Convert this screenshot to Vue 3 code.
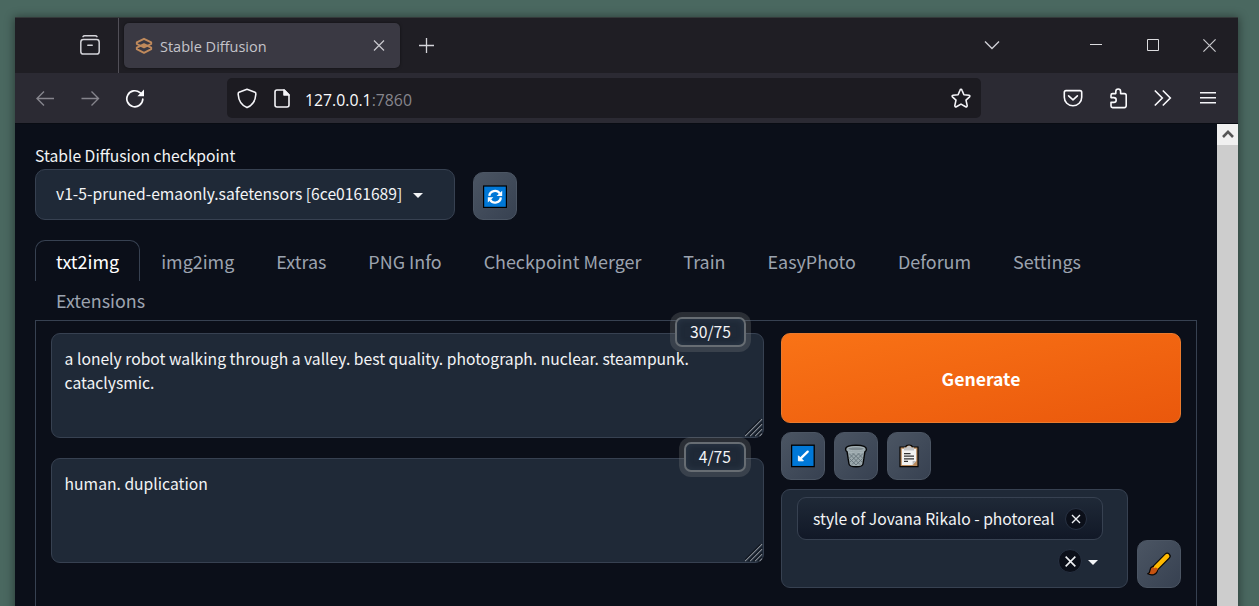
<script setup>
const tabs = ['txt2img', 'img2img', 'Extras', 'PNG Info', 'Checkpoint Merger', 'Train', 'EasyPhoto', 'Deforum', 'Settings', 'Extensions']
</script>

<template>
  <div class="desktop">
    <div class="window">
      <header class="tabstrip">
        <div class="recent">
          <svg width="22" height="22" viewBox="0 0 22 22" fill="none" stroke="#d4d4d9" stroke-width="1.5" stroke-linecap="round">
            <path d="M4 2.6C4.4 1.9 5 1.7 5.7 1.7H16.3C17 1.7 17.6 1.9 18 2.6" />
            <rect x="1.8" y="5.6" width="18.4" height="14.4" rx="2.6" />
            <path d="M8.8 11.2H13.2" />
          </svg>
        </div>
        <div class="browser-tab">
          <svg class="favicon" width="18" height="18" viewBox="0 0 18 18" fill="none" stroke="#c08a5c" stroke-width="1.9" stroke-linejoin="round">
            <path d="M1.8 7V5.4L9 1.8L16.2 5.4V7L9 10.4Z" />
            <path d="M1.8 10.6V12.2L9 15.8L16.2 12.2V10.6L9 7.2Z" />
            <path d="M6.5 8.8L9 7.4L11.5 8.8L9 10.2Z" fill="#c08a5c" stroke="none" />
          </svg>
          <span class="tab-title">Stable Diffusion</span>
          <svg class="tab-close" width="12" height="12" viewBox="0 0 12 12" stroke="#c9c9cf" stroke-width="1.2"><path d="M1 .5L11 10.5M11 .5L1 10.5" /></svg>
        </div>
        <svg class="plus" width="16" height="16" viewBox="0 0 16 16" stroke="#d4d4d9" stroke-width="1.3"><path d="M7.5 0V15M0 7.5H15" /></svg>
        <div class="window-buttons">
          <svg width="16" height="10" viewBox="0 0 16 10" fill="none" stroke="#cfcfd4" stroke-width="1.4"><path d="M1 .5L8 7.5L15 .5" /></svg>
          <svg class="min" width="12" height="13" viewBox="0 0 12 13" stroke="#dcdcdf"><path d="M0 5.5H12" /></svg>
          <svg class="max" width="12" height="12" viewBox="0 0 12 12" fill="none" stroke="#dcdcdf"><path d="M.5 -.5H11.5V10.5H.5Z" /></svg>
          <svg class="cls" width="13" height="13" viewBox="0 0 13 13" stroke="#c8c8cc" stroke-width="1.2"><path d="M.4 .4L12.6 12.6M12.6 .4L.4 12.6" /></svg>
        </div>
      </header>

      <nav class="toolbar">
        <svg class="back" width="19" height="16" viewBox="0 0 19 16" fill="none" stroke="#85848c" stroke-width="1.4"><path d="M18 8.5H1M8 1.5L1 8.5L8 15.5" /></svg>
        <svg class="forward" width="19" height="16" viewBox="0 0 19 16" fill="none" stroke="#85848c" stroke-width="1.4"><path d="M.5 8.5H17.5M10.5 1.5L17.5 8.5L10.5 15.5" /></svg>
        <svg class="reload" width="20" height="20" viewBox="0 0 20 20" fill="none" stroke="#fbfbfe" stroke-width="1.7">
          <path d="M17.8 11.2A8 8 0 1 1 15 4.7L17 6.4" stroke-linecap="round" />
          <path d="M19 1.6V8.2H12.4Z" fill="#fbfbfe" stroke="none" />
        </svg>
        <div class="urlbar">
          <svg width="20" height="21" viewBox="0 0 20 21" fill="none" stroke="#f4f4f8" stroke-width="1.6" stroke-linejoin="round"><path d="M10 1.2L18 4.3Q19 4.7 18.8 6.5C18.4 13 15.6 17.2 10 19.6C4.4 17.2 1.6 13 1.2 6.5Q1 4.7 2 4.3Z" /></svg>
          <svg class="doc" width="17" height="19" viewBox="0 0 17 19" fill="none" stroke="#f4f4f8" stroke-width="1.6" stroke-linejoin="round">
            <path d="M10.2 1H3Q1 1 1 3V16Q1 18 3 18H13Q15 18 15 16V6Z" /><path d="M10 1V6H15Z" fill="#f4f4f8" />
          </svg>
          <span class="url">127.0.0.1<span class="port">:7860</span></span>
          <svg class="star" width="22" height="21" viewBox="0 0 22 21" fill="none" stroke="#f4f4f8" stroke-width="1.6" stroke-linejoin="round"><path d="M11 1.4Q11.7 1.4 12 2.2L13.9 6.8L19 7.2Q20.4 7.6 19.6 8.8L16 12.2L17.2 17.7Q17 19.4 15.6 18.7L11 16.1L6.4 18.7Q5 19.4 4.8 17.7L6 12.2L2.4 8.8Q1.6 7.6 3 7.2L8.1 6.8L10 2.2Q10.3 1.4 11 1.4Z" /></svg>
        </div>
        <div class="tools">
          <svg width="20" height="18" viewBox="0 0 20 18" fill="none" stroke="#fbfbfe" stroke-width="1.6" stroke-linecap="round" stroke-linejoin="round"><path d="M3 1.6H17Q18.7 1.6 18.7 3.4V8.2C18.7 13 15 16.8 10 16.8S1.3 13 1.3 8.2V3.4Q1.3 1.6 3 1.6Z" /><path d="M5.6 6.8L10 10.8L14.4 6.8" /></svg>
          <svg class="ext" width="19" height="21" viewBox="0 0 19 21" fill="none" stroke="#fbfbfe" stroke-width="1.6" stroke-linejoin="round"><path d="M6.8 5.6V3.4A2.4 2.4 0 0 1 11.6 3.4V5.6H15.4Q17.2 5.6 17.2 7.4V17.6Q17.2 19.6 15.4 19.6H3.6Q2 19.6 2 18V14.4H4.8A2.4 2.4 0 0 0 4.8 9.6H2V7.2Q2 5.6 3.6 5.6Z" /></svg>
          <svg class="more" width="18" height="18" viewBox="0 0 18 18" fill="none" stroke="#fbfbfe" stroke-width="1.6"><path d="M.8 1.5L8.3 9L.8 16.5M8.8 1.5L16.3 9L8.8 16.5" /></svg>
          <svg class="menu" width="16" height="14" viewBox="0 0 16 14" stroke="#f4f4f8" stroke-width="1.6"><path d="M0 1.7H16M0 6.7H16M0 11.7H16" /></svg>
        </div>
      </nav>

      <div class="viewport">
        <main class="page">
          <div class="field-label">Stable Diffusion checkpoint</div>
          <div class="checkpoint-row">
            <div class="select"><span>v1-5-pruned-emaonly.safetensors [6ce0161689]</span><i class="caret"></i></div>
            <button class="tool">
              <svg width="24" height="24" viewBox="0 0 24 24">
                <rect x=".6" y="2" width="22.8" height="21.4" fill="#0078d7" stroke="#000" stroke-width="1.2" />
                <g fill="none" stroke="#fff" stroke-width="2.3"><path d="M6.3 11.8A5.7 5.5 0 0 1 16.8 9.5" /><path d="M17.8 13.4A5.7 5.5 0 0 1 7.2 15.9" /></g>
                <path d="M19.2 6.7V12H13.6ZM4.8 18.6V13.3H10.4Z" fill="#fff" />
              </svg>
            </button>
          </div>

          <div class="tabs">
            <button v-for="(tab, i) in tabs" :key="tab" class="tab" :class="{ active: i === 0 }">{{ tab }}</button>
          </div>

          <section class="panel">
            <div class="prompts">
              <div class="prompt">
                <div class="counter">30/75</div>
                <span>a lonely robot walking through a valley. best quality. photograph. nuclear. steampunk.<br>cataclysmic.</span>
                <svg class="grip" width="18" height="18" viewBox="0 0 18 18" stroke="#8b9098" stroke-width="1.1"><path d="M0 17L17 0M5 17L17 5M10 17L17 10M14.5 17L17 14.5" /><path d="M0 15.5L15.5 0M3.6 17L17 3.6M8.6 17L17 8.6M13 17L17 13" stroke="#111720" /></svg>
              </div>
              <div class="prompt">
                <div class="counter">4/75</div>
                <span>human. duplication</span>
                <svg class="grip" width="18" height="18" viewBox="0 0 18 18" stroke="#8b9098" stroke-width="1.1"><path d="M0 17L17 0M5 17L17 5M10 17L17 10M14.5 17L17 14.5" /><path d="M0 15.5L15.5 0M3.6 17L17 3.6M8.6 17L17 8.6M13 17L17 13" stroke="#111720" /></svg>
              </div>
            </div>

            <div class="actions">
              <button class="generate">Generate</button>
              <div class="tool-row">
                <button class="tool">
                  <svg width="24" height="24" viewBox="0 0 24 24"><rect x=".6" y="1.2" width="22.6" height="21.4" fill="#0078d7" stroke="#000" stroke-width="1.3" /><path d="M16.7 7.6L9.5 14.6" stroke="#fff" stroke-width="2.3" stroke-linecap="round" /><path d="M7.4 11.8V16.8H12.4Z" fill="#fff" stroke="#fff" stroke-linejoin="round" /></svg>
                </button>
                <button class="tool">
                  <svg width="24" height="24" viewBox="0 0 24 24">
                    <path d="M1.6 5.2C1.6 2.6 6 1.2 12 1.2S22.4 2.6 22.4 5.2Q22.4 7.2 20.9 7.8L19 20Q18.5 22.8 12 22.8T5 20L3.1 7.8Q1.6 7.2 1.6 5.2Z" fill="#9ba8ac" stroke="#050607" stroke-width="1.4" />
                    <ellipse cx="12" cy="4.8" rx="8.4" ry="2" fill="#7d898e" stroke="#a9b5b9" />
                    <path d="M5 9.5L16 20.5M8 8.5L18 18M13 8.5L19 14.5M5.5 14.5L12 21M19 9.5L8 20.5M16 8.5L6 18M11 8.5L5 14.5M18.5 14.5L12 21" stroke="#66747a" stroke-width=".9" />
                    <path d="M4 8Q12 10 20 8" fill="none" stroke="#a9b5b9" />
                  </svg>
                </button>
                <button class="tool">
                  <svg width="24" height="24" viewBox="0 0 24 24">
                    <path d="M3 3H8.5Q9 1 12 1T15.5 3H21V22.6H3Z" fill="#b98a5c" stroke="#090705" stroke-width="1.2" />
                    <path d="M4.8 4.8H19.2V17L15.6 21H4.8Z" fill="#f3f3f2" /><path d="M19.2 17H15.6V21Z" fill="#bdbdbd" />
                    <path d="M7 6.4V3.6H9.6Q10 1.8 12 1.8T14.4 3.6H17V6.4Z" fill="#c4c4c4" />
                    <path d="M7 9.6H13.5M7 12.2H17M7 14.8H17M7 17.4H11" stroke="#333" stroke-width="1.2" />
                  </svg>
                </button>
              </div>
              <div class="style-row">
                <div class="styles">
                  <div class="chip"><span>style of Jovana Rikalo - photoreal</span><span class="round small"><svg width="10" height="10" viewBox="0 0 10 10" stroke="#eef0f3" stroke-width="1.35"><path d="M1 1L9 9M9 1L1 9" /></svg></span></div>
                  <div class="style-end"><span class="round"><svg width="11" height="11" viewBox="0 0 10 10" stroke="#eef0f3" stroke-width="1.45"><path d="M.6 .6L9.4 9.4M9.4 .6L.6 9.4" /></svg></span><i class="caret low"></i></div>
                </div>
                <button class="tool">
                  <svg width="24" height="24" viewBox="0 0 24 24">
                    <path d="M8.7 15.6L20.2 4.1" stroke="#0a0806" stroke-width="7" stroke-linecap="round" />
                    <path d="M.8 21.8Q2.8 21 3 18.3C3.4 14.3 7 13.5 9.2 15.4C11.6 17.7 10.2 21.6 6.8 22.6Q3.2 23.2 .8 21.8Z" fill="#c75310" stroke="#0a0806" stroke-width="1.3" />
                    <path d="M9 15.3L20.1 4.2" stroke="#ffb900" stroke-width="4.6" stroke-linecap="round" />
                    <path d="M6 17Q9 14 11 17L9.2 19.8Q6 20 6 17Z" fill="#c75310" />
                  </svg>
                </button>
              </div>
            </div>
          </section>
        </main>
        <aside class="scrollbar">
          <div class="scroll-up"><svg width="12" height="9" viewBox="0 0 12 9" fill="none" stroke="#555" stroke-width="2.6"><path d="M1 7L6 1.9L11 7" /></svg></div>
        </aside>
      </div>
    </div>
  </div>
</template>

<style>
html, body { margin: 0; overflow: hidden; background: #4a6860; }
</style>

<style scoped>
* { box-sizing: border-box; }
svg { display: block; flex: none; }
button { border: 0; padding: 0; margin: 0; font: inherit; color: inherit; }
.desktop { height: 606px; padding: 17px 21px 0 15px; overflow: hidden; background: #4a6860; }
.window { height: 620px; box-shadow: 0 1px 9px 1px rgba(0, 0, 0, .42); display: flex; flex-direction: column; background: #0b0f19; }
.tabstrip { height: 56px; flex: none; display: flex; align-items: center; background: #1f1e24; border-top: 1px solid #34393a; font-family: "Open Sans", "Noto Sans", sans-serif; }
.recent { width: 104px; height: 100%; border-right: 1px solid #514f57; padding: 16px 0 0 64px; }
.browser-tab { width: 276px; height: 45px; margin-left: 5px; padding: 0 15px 0 11px; border-radius: 5px; background: #3a3943; display: flex; align-items: center; box-shadow: 0 0 3px rgba(0, 0, 0, .5); }
.favicon { margin-right: 7px; }
.tab-title { font-size: 14.5px; color: #c4c4ca; line-height: 20px; padding-top: 2px; white-space: nowrap; }
.tab-close { margin-left: auto; }
.plus { margin-left: 19px; }
.window-buttons { margin-left: auto; padding-right: 22px; display: flex; align-items: center; }
.min { margin-left: 90px; }
.max { margin-left: 45px; overflow: visible; }
.cls { margin-left: 44px; }
.toolbar { height: 50px; flex: none; display: flex; align-items: center; background: #2b2a33; padding-left: 21px; }
.forward { margin-left: 26px; }
.reload { margin-left: 25px; }
.urlbar { width: 754px; height: 40px; margin-left: 82px; padding: 0 9px 0 10px; border-radius: 5px; background: #1c1b21; display: flex; align-items: center; font-family: "Open Sans", "Noto Sans", sans-serif; font-size: 15.8px; color: #fbfbfe; }
.doc { margin-left: 17px; }
.url { margin-left: 14px; padding-top: 4px; line-height: 20px; white-space: nowrap; }
.port { color: #86858c; }
.star { margin-left: auto; }
.tools { margin-left: 82px; display: flex; align-items: center; }
.ext { margin-left: 26px; }
.more { margin-left: 26px; }
.menu { margin-left: 28px; }
.viewport { flex: 1; display: flex; border-top: 1px solid #090c13; min-height: 0; }
.page { flex: 1; padding: 20px 20px 0; background: #0b0f19; color: #f3f4f6; font-family: "Noto Sans CJK SC", "Noto Sans", sans-serif; font-size: 15.68px; }
.scrollbar { width: 21px; background: #cdcdcd; }
.scroll-up { height: 21px; background: #f0f0f0; display: grid; place-items: center; }
.field-label { height: 25px; line-height: 23px; white-space: nowrap; }
.checkpoint-row { display: flex; align-items: flex-end; gap: 18px; height: 51px; }
.select { width: 420px; height: 51px; padding: 0 20px 2px; border: 1px solid #374151; border-radius: 10px; background: #1f2937; display: flex; align-items: center; white-space: nowrap; }
.caret { flex: none; margin-left: 11px; margin-top: 3px; border: 5px solid transparent; border-top-color: #f3f4f6; border-bottom: 0; }
.tool { width: 44px; height: 48px; flex: none; display: grid; place-items: center; border: 1px solid #4b5563; border-radius: 10px; background: linear-gradient(to bottom right, #4b5563, #374151); }
.tabs { margin-top: 20px; display: flex; flex-wrap: wrap; align-content: flex-start; height: 80px; font-size: 17.92px; color: #9ca3af; }
.tab { height: 41px; margin-bottom: -2px; padding: 0 20px; background: transparent; border: 1px solid transparent; border-bottom: 0; border-radius: 10px 10px 0 0; line-height: 40px; white-space: nowrap; }
.tab.active { color: #fff; border-color: #374151; }
.panel { height: 330px; padding: 12px 15px; border: 1px solid #374151; display: flex; gap: 17px; }
.prompts { width: 713px; display: flex; flex-direction: column; gap: 20px; }
.prompt { position: relative; height: 105px; padding: 13px 12.6px; border: 1px solid #374151; border-radius: 9px; background: #1f2937; line-height: 24px; white-space: nowrap; }
.counter { position: absolute; right: 17px; top: -17px; height: 30px; padding: 0 13px; border: 2px solid #676d73; border-radius: 7px; background: #1f2937; box-shadow: 0 0 0 5px rgba(135, 138, 140, .25), inset 0 0 6px #2d3a49; line-height: 25px; }
.grip { position: absolute; right: 0; bottom: 0; }
.actions { width: 400px; }
.generate { display: block; width: 400px; height: 90px; border: 1px solid #ea7a2d; border-radius: 9px; background: linear-gradient(to bottom right, #f97316, #ea580c); color: #fff; font-size: 17.6px; font-weight: 700; }
.tool-row { display: flex; gap: 9px; margin-top: 9px; }
.style-row { display: flex; gap: 9px; align-items: flex-end; margin-top: 9px; }
.styles { width: 347px; height: 99px; border: 1px solid #374151; border-radius: 9px; background: #1f2937; padding: 7px 24px 0 15px; }
.chip { height: 43px; padding: 0 15px; border: 1px solid #374151; border-radius: 9px; background: linear-gradient(#1f2937, #111827); display: flex; align-items: center; justify-content: space-between; white-space: nowrap; }
.round { width: 24px; height: 24px; border: 1px solid #273142; border-radius: 50%; background: #0b0f19; display: grid; place-items: center; }
.round.small { width: 22px; height: 22px; }
.style-end { margin-top: 9px; display: flex; justify-content: flex-end; align-items: center; padding-right: 5px; }
.low { margin-left: 6px; }
</style>
